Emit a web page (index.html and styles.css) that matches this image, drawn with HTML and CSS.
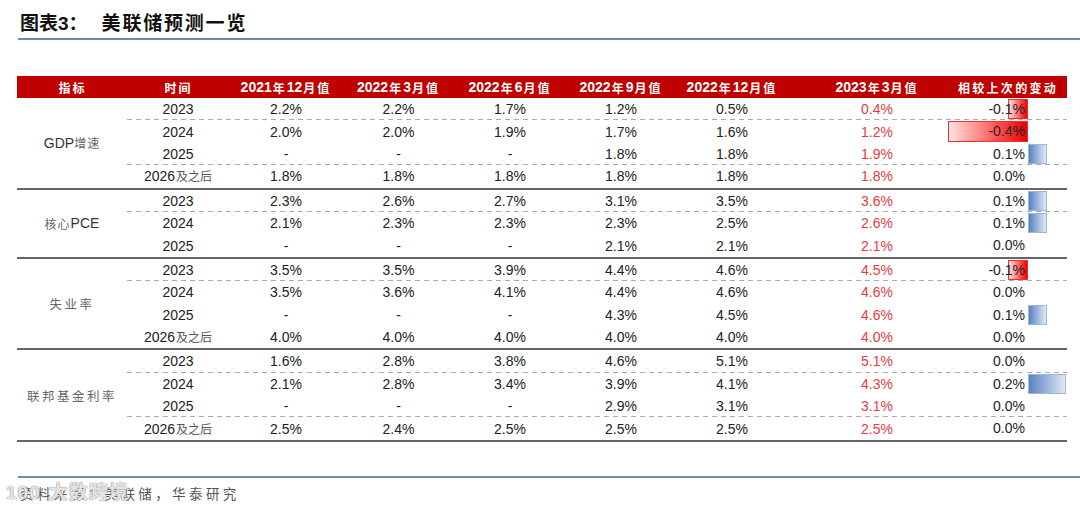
FILE: index.html
```html
<!DOCTYPE html>
<html lang="zh">
<head>
<meta charset="utf-8">
<link rel="stylesheet" href="styles.css">
</head>
<body>
<div class="page">
  <div class="title"><span class="t-num">图表3：</span><span class="t-name">美联储预测一览</span></div>

  <div class="table">
    <div class="thead">
      <div class="th"><span class="cn">指标</span></div>
      <div class="th"><span class="cn">时间</span></div>
      <div class="th">2021<span class="cn">年</span>12<span class="cn">月值</span></div>
      <div class="th">2022<span class="cn">年</span>3<span class="cn">月值</span></div>
      <div class="th">2022<span class="cn">年</span>6<span class="cn">月值</span></div>
      <div class="th">2022<span class="cn">年</span>9<span class="cn">月值</span></div>
      <div class="th">2022<span class="cn">年</span>12<span class="cn">月值</span></div>
      <div class="th">2023<span class="cn">年</span>3<span class="cn">月值</span></div>
      <div class="th th-last"><span class="cn">相较上次的变动</span></div>
    </div>

    <div class="group">
      <div class="label">GDP<span class="lcn">增速</span></div>
      <div class="rows">
        <div class="row dash"><div class="c">2023</div><div class="c">2.2%</div><div class="c">2.2%</div><div class="c">1.7%</div><div class="c">1.2%</div><div class="c">0.5%</div><div class="c red">0.4%</div><div class="c chg"><span class="bar neg" style="width:20px"></span><span class="v">-0.1%</span></div></div>
        <div class="row"><div class="c">2024</div><div class="c">2.0%</div><div class="c">2.0%</div><div class="c">1.9%</div><div class="c">1.7%</div><div class="c">1.6%</div><div class="c red">1.2%</div><div class="c chg"><span class="bar neg" style="width:80px"></span><span class="v">-0.4%</span></div></div>
        <div class="row dash"><div class="c">2025</div><div class="c">-</div><div class="c">-</div><div class="c">-</div><div class="c">1.8%</div><div class="c">1.8%</div><div class="c red">1.9%</div><div class="c chg"><span class="bar pos" style="width:19px"></span><span class="v">0.1%</span></div></div>
        <div class="row"><div class="c">2026<span class="scn">及之后</span></div><div class="c">1.8%</div><div class="c">1.8%</div><div class="c">1.8%</div><div class="c">1.8%</div><div class="c">1.8%</div><div class="c red">1.8%</div><div class="c chg"><span class="v">0.0%</span></div></div>
      </div>
    </div>

    <div class="group">
      <div class="label"><span class="lcn">核心</span>PCE</div>
      <div class="rows">
        <div class="row dash"><div class="c">2023</div><div class="c">2.3%</div><div class="c">2.6%</div><div class="c">2.7%</div><div class="c">3.1%</div><div class="c">3.5%</div><div class="c red">3.6%</div><div class="c chg"><span class="bar pos" style="width:19px"></span><span class="v">0.1%</span></div></div>
        <div class="row"><div class="c">2024</div><div class="c">2.1%</div><div class="c">2.3%</div><div class="c">2.3%</div><div class="c">2.3%</div><div class="c">2.5%</div><div class="c red">2.6%</div><div class="c chg"><span class="bar pos" style="width:19px"></span><span class="v">0.1%</span></div></div>
        <div class="row"><div class="c">2025</div><div class="c">-</div><div class="c">-</div><div class="c">-</div><div class="c">2.1%</div><div class="c">2.1%</div><div class="c red">2.1%</div><div class="c chg"><span class="v">0.0%</span></div></div>
      </div>
    </div>

    <div class="group">
      <div class="label"><span class="lcn wide">失业率</span></div>
      <div class="rows">
        <div class="row dash"><div class="c">2023</div><div class="c">3.5%</div><div class="c">3.5%</div><div class="c">3.9%</div><div class="c">4.4%</div><div class="c">4.6%</div><div class="c red">4.5%</div><div class="c chg"><span class="bar neg" style="width:20px"></span><span class="v">-0.1%</span></div></div>
        <div class="row"><div class="c">2024</div><div class="c">3.5%</div><div class="c">3.6%</div><div class="c">4.1%</div><div class="c">4.4%</div><div class="c">4.6%</div><div class="c red">4.6%</div><div class="c chg"><span class="v">0.0%</span></div></div>
        <div class="row"><div class="c">2025</div><div class="c">-</div><div class="c">-</div><div class="c">-</div><div class="c">4.3%</div><div class="c">4.5%</div><div class="c red">4.6%</div><div class="c chg"><span class="bar pos" style="width:19px"></span><span class="v">0.1%</span></div></div>
        <div class="row"><div class="c">2026<span class="scn">及之后</span></div><div class="c">4.0%</div><div class="c">4.0%</div><div class="c">4.0%</div><div class="c">4.0%</div><div class="c">4.0%</div><div class="c red">4.0%</div><div class="c chg"><span class="v">0.0%</span></div></div>
      </div>
    </div>

    <div class="group last">
      <div class="label"><span class="lcn wide">联邦基金利率</span></div>
      <div class="rows">
        <div class="row dash"><div class="c">2023</div><div class="c">1.6%</div><div class="c">2.8%</div><div class="c">3.8%</div><div class="c">4.6%</div><div class="c">5.1%</div><div class="c red">5.1%</div><div class="c chg"><span class="v">0.0%</span></div></div>
        <div class="row"><div class="c">2024</div><div class="c">2.1%</div><div class="c">2.8%</div><div class="c">3.4%</div><div class="c">3.9%</div><div class="c">4.1%</div><div class="c red">4.3%</div><div class="c chg"><span class="bar pos" style="width:38px"></span><span class="v">0.2%</span></div></div>
        <div class="row dash"><div class="c">2025</div><div class="c">-</div><div class="c">-</div><div class="c">-</div><div class="c">2.9%</div><div class="c">3.1%</div><div class="c red">3.1%</div><div class="c chg"><span class="v">0.0%</span></div></div>
        <div class="row"><div class="c">2026<span class="scn">及之后</span></div><div class="c">2.5%</div><div class="c">2.4%</div><div class="c">2.5%</div><div class="c">2.5%</div><div class="c">2.5%</div><div class="c red">2.5%</div><div class="c chg"><span class="v">0.0%</span></div></div>
      </div>
    </div>
  </div>

  <div class="footer">
    <span class="source">资料来源：美联储，华泰研究</span>
    <span class="watermark"><span class="wm-logo">100</span>大数跨境</span>
  </div>
</div>
</body>
</html>
```

FILE: styles.css
```css
* { box-sizing: border-box; }
html, body { margin: 0; padding: 0; background: #fff; }
body {
  width: 1080px;
  height: 511px;
  overflow: hidden;
  font-family: "Liberation Sans", Arial, "Noto Sans CJK SC", sans-serif;
  color: #222;
}
.page { position: relative; width: 1080px; }

.title {
  margin-left: 18px;
  padding: 13px 0 3px 2px;
  line-height: 22px;
  font-size: 19px;
  font-weight: 700;
  color: #111;
  font-family: "Liberation Sans", "Noto Sans CJK SC", sans-serif;
  border-bottom: 2px solid #6f89b1;
}
.t-num { letter-spacing: 0px; }
.t-name { margin-left: 14px; letter-spacing: 1.8px; }

.table {
  margin: 36px 0 0 17px;
  width: 1050px;
}
.thead {
  display: grid;
  grid-template-columns: 110px 102px 114px 111px 112px 110px 112px 178px 101px;
  height: 22px;
  background: #c00000;
  color: #fff;
}
.th {
  display: flex;
  align-items: center;
  justify-content: center;
  font-size: 14px;
  font-weight: 700;
  white-space: nowrap;
}
.th .cn {
  font-family: "Noto Sans CJK SC", sans-serif;
  font-size: 12px;
  font-weight: 700;
  letter-spacing: 2px;
  margin-left: 1px;
}
.th-last { justify-content: center; padding-right: 18px; }
.th-last .cn { letter-spacing: 2.3px; }

.group {
  display: grid;
  grid-template-columns: 110px 940px;
  border-bottom: 2px solid #666;
}
.label {
  display: flex;
  align-items: center;
  justify-content: center;
  font-size: 14px;
  color: #333;
  white-space: nowrap;
}
.lcn {
  font-family: "Noto Sans CJK SC", sans-serif;
  font-size: 12px;
  color: #666;
  letter-spacing: 1px;
}
.lcn.wide { font-size: 12.5px; letter-spacing: 2.5px; }

.row {
  display: grid;
  grid-template-columns: 102px 114px 111px 112px 110px 112px 178px 101px;
  height: 22.4px;
  align-items: center;
}
.row.dash {
  background-image: repeating-linear-gradient(to right, #aaa 0 5px, transparent 5px 9px);
  background-size: 100% 1px;
  background-repeat: no-repeat;
  background-position: left bottom;
}
.c {
  text-align: center;
  font-size: 14px;
  line-height: 22px;
  color: #222;
  white-space: nowrap;
}
.c.red { color: #ea3a40; }
.scn {
  font-family: "Noto Sans CJK SC", sans-serif;
  font-size: 12px;
  color: #555;
  margin-left: 1px;
}
.chg {
  position: relative;
  height: 22.4px;
  text-align: right;
  padding-right: 42px;
}
.chg .v { position: relative; }
.bar {
  position: absolute;
  top: 1px;
  bottom: 1px;
}
.bar.pos {
  left: 62px;
  background: linear-gradient(to right, #5a82c2, #dfe8f5);
  border: 1px solid #9fb6dc;
}
.bar.neg {
  right: 39px;
  background: linear-gradient(to right, #ffe3e3, #ff4040 70%, #e80000);
  border: 1px solid #f03030;
}

.footer {
  position: relative;
  margin: 34px 0 0 18px;
  border-top: 2px solid #6f89b1;
  padding: 5px 0 0 2px;
  line-height: 20px;
}
.source {
  font-family: "Noto Sans CJK SC", sans-serif;
  font-size: 13.5px;
  color: #555;
  letter-spacing: 3.4px;
}
.watermark {
  position: absolute;
  left: -12px;
  top: 3px;
  font-family: "Noto Sans CJK SC", sans-serif;
  font-size: 19px;
  font-weight: 700;
  color: rgba(255, 255, 255, 0.8);
  text-shadow: 0 0 1px #888, 0 0 1px #888;
  letter-spacing: 1px;
}
.wm-logo {
  font-family: "Liberation Sans", sans-serif;
  font-weight: 700;
  margin-right: 8px;
}
```
